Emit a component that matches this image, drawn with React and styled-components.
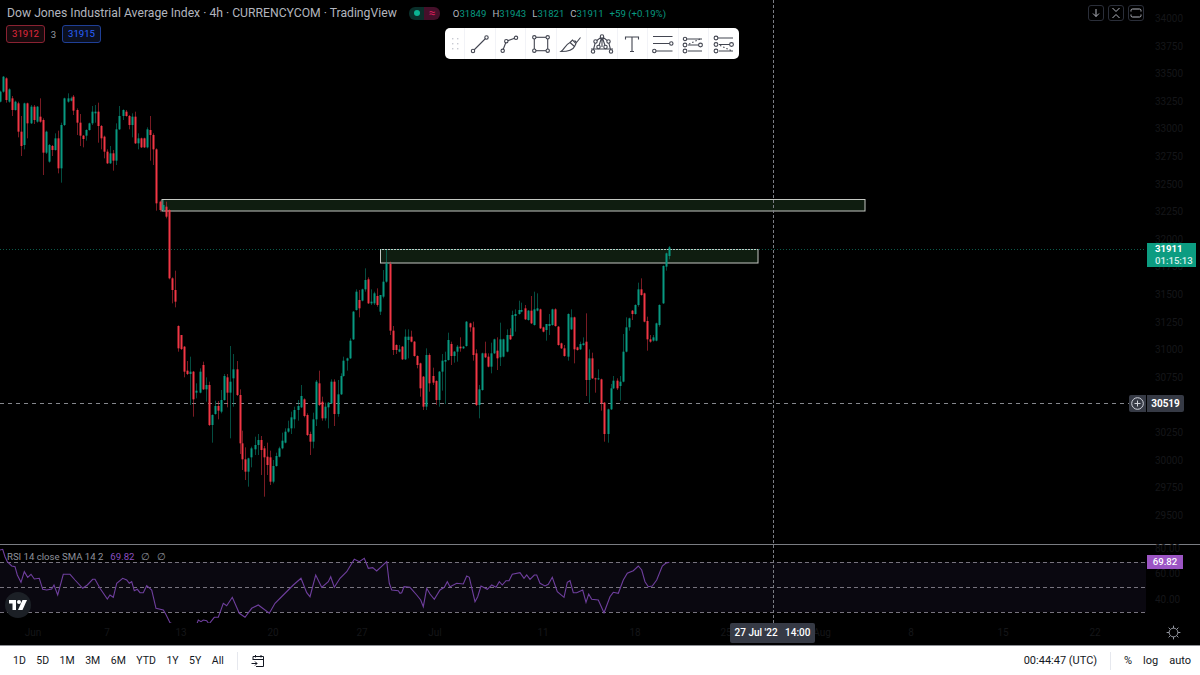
import React from 'react'
import styled, { createGlobalStyle } from 'styled-components'

const GREEN = '#089981'
const RED = '#f23645'
const FONT = 'Roboto, "Noto Sans", "Liberation Sans", sans-serif'

const GlobalStyle = createGlobalStyle`
  html, body { margin: 0; padding: 0; background: #000; }
  body { font-family: ${FONT}; overflow: hidden; }
`

// candles as read off the chart: [up, x, bodyTop, bodyBottom, wickTop, wickBottom], in 3x crop coords
const CROPS = [
  [0, 70, [
    [1,0,65,95,62,97],[1,8,20,65,18,68],[0,17,25,90,22,98],[1,27,58,95,55,98],[0,36,85,120,78,138],[1,45,95,120,92,122],
    [0,54,100,185,95,202],[0,64,185,228,138,258],[1,73,100,225,98,238],[0,82,100,160,98,205],[1,92,110,160,105,162],
    [0,101,110,150,105,162],[1,110,110,155,108,158],[0,119,140,155,85,158],[0,128,150,248,145,315],[1,137,185,248,182,252],
    [1,146,225,275,222,278],[0,155,228,240,225,258],[1,165,205,240,190,242],[0,174,205,295,182,310],[1,184,165,295,158,338],
    [1,193,85,165,83,168],[1,203,85,95,70,98],[1,212,85,92,80,94],[0,220,80,122,75,135],[0,230,120,158,115,195],
    [0,239,158,197,132,228],[0,248,197,207,195,232],[1,257,180,197,178,212],[1,266,160,180,158,182],[1,276,125,160,108,165],
    [1,285,125,130,105,158],[0,294,125,168,98,218],[0,304,168,205,165,238],[0,313,200,245,197,265],[0,322,245,280,238,282],
    [1,331,250,280,228,282],[0,340,250,272,240,302],[1,349,178,272,160,285],[1,358,138,178,108,180],[1,368,120,138,118,150],
    [0,377,125,138,120,140],[0,386,138,165,135,178],[1,396,140,165,130,202],[0,405,140,220,125,222],[1,415,205,220,190,238],
    [0,423,205,232,203,234],[0,432,205,232,203,234],[1,441,178,232,172,235],[0,450,180,195,138,272],[0,460,195,238,190,285],
    [0,469,238,400,235,422],[0,479,395,420,392,425],[1,488,405,420,390,422],[0,497,410,440,395,445],[0,507,420,625,418,628],
    [0,516,625,660,622,700],[0,524,660,695,602,712]
  ]],
  [150, 300, [
    [0,83,78,145,76,155],[0,92,105,147,105,150],[0,102,140,215,138,232],[0,111,212,222,183,225],[1,121,215,222,170,315],
    [0,130,215,298,213,350],[1,139,272,278,250,295],[1,149,215,278,205,280],[0,158,195,268,185,270],[1,167,255,268,232,305],
    [0,176,255,375,245,378],[1,185,345,375,343,428],[1,194,318,342,302,344],[0,203,318,332,303,358],[1,213,300,335,270,340],
    [1,222,228,300,222,302],[0,231,232,278,222,322],[1,241,245,278,138,415],[1,250,208,235,162,320],[0,260,208,285,183,288],
    [0,269,285,430,268,462],[0,277,430,478,392,510],[0,286,478,515,442,540],[1,295,475,515,473,560],[1,304,445,472,440,502],
    [1,314,435,448,410,465],[1,323,420,435,402,465],[0,332,420,450,408,525],[0,342,445,472,438,590],[0,351,470,495,428,525],
    [0,360,472,545,452,555],[1,370,498,545,480,550],[1,378,468,498,458,500],[1,387,445,470,440,472],[1,396,422,445,398,448],
    [1,406,395,428,385,430],[1,415,385,395,362,398],[1,424,352,385,335,402],[1,433,330,358,320,385],[1,443,318,330,300,362],
    [1,452,288,322,255,324],[0,461,298,348,295,352],[0,471,345,405,340,408],[0,479,402,425,395,465],[1,488,358,425,338,445],
    [1,498,245,358,240,378],[0,507,250,315,212,318],[0,516,305,355,290,362],[1,525,320,355,308,362],[1,535,308,322,306,385],
    [1,544,245,310,238,312],[0,553,245,342,238,378],[1,563,283,342,240,350],[1,572,228,283,220,285],[1,580,182,228,170,230],
    [1,590,175,182,173,212],[1,599,122,175,115,177],[1,608,35,118,33,120]
  ]],
  [340, 240, [
    [1,47,155,210,148,212],[0,56,180,205,150,232],[1,66,148,182,146,184],[1,75,120,148,85,155],[0,85,118,190,112,192],
    [1,94,185,190,148,195],[1,103,160,190,155,195],[0,112,168,195,145,200],[1,121,165,215,165,225],[1,130,125,170,90,175],
    [1,139,70,125,30,128],[0,149,72,272,65,285]
  ]],
  [150, 300, [
    [0,728,92,150,78,165],[0,738,135,150,133,162],[1,747,148,155,135,157],[0,756,140,178,138,180],[1,765,110,178,88,180],
    [1,774,110,120,88,175],[0,783,110,125,92,127],[0,792,125,168,123,170],[0,801,168,195,166,205]
  ]],
  [420, 240, [
    [0,0,370,445,368,470],[0,9,410,500,408,510],[1,18,345,500,325,510],[0,28,345,430,340,455],[0,38,408,428,383,435],
    [0,47,423,480,421,495],[1,56,395,480,393,500],[1,65,362,395,342,452],[1,74,360,365,335,492],[1,84,300,360,278,362],
    [0,93,312,348,305,375],[1,102,335,348,333,368],[1,111,320,335,315,365],[0,120,320,325,292,335],[1,130,320,325,318,327],
    [1,139,245,318,243,320],[0,149,250,262,248,275],[0,158,262,345,245,362],[0,167,340,495,328,498],[1,176,448,495,435,535],
    [1,185,340,450,338,452],[0,194,340,352,305,354],[0,204,350,380,340,382],[1,213,340,380,308,400],[1,222,298,340,296,342],
    [0,231,332,355,292,390],[1,241,298,352,248,378],[1,250,298,350,296,352],[1,260,285,335,268,337],[0,269,285,298,265,300],
    [1,277,225,288,212,290],[1,286,222,228,208,275],[1,296,210,222,182,224],[1,304,210,215,188,217],[0,314,205,238,195,240],
    [1,323,212,240,210,242],[0,333,212,250,168,252],[1,342,208,255,155,257],[1,351,205,212,160,214],[0,360,208,265,206,267],
    [0,370,262,275,260,277],[1,378,252,270,252,302],[1,387,252,258,222,285],[1,396,208,255,206,257],[0,405,208,258,205,260],
    [0,415,260,315,258,317],[0,424,310,325,308,327],[0,433,325,348,315,350],[1,443,222,350,220,362],[1,452,232,268,208,270],
    [0,461,232,328,230,370],[0,470,322,330,320,332],[1,479,312,328,305,330],[1,488,310,315,292,317],[0,498,305,420,220,468],
    [1,507,355,420,328,488],[0,516,355,415,338,417],[0,525,415,418,413,458],[1,535,415,418,388,420],[0,544,418,490,416,512],
    [0,553,488,582,486,605],[1,563,508,582,506,608],[1,572,445,508,432,510],[1,580,422,445,408,447],[0,590,422,445,415,450],
    [1,599,425,438,408,482],[1,608,335,425,282,427],[1,617,262,335,232,337],[1,627,235,262,233,272],[0,636,212,222,210,240],
    [1,645,195,222,193,224],[1,655,148,195,128,200],[0,664,148,165,115,167],[0,673,160,245,158,247],[0,681,243,298,230,332],
    [0,690,298,305,285,308],[1,700,292,302,285,305],[1,709,250,302,248,304],[1,718,195,255,193,260],[1,728,78,190,76,192],
    [1,737,40,80,38,92],[1,746,22,48,18,58]
  ]]
]

const candles = CROPS.flatMap(([ox, oy, rows]) =>
  rows.map(([up, x, t, b, wt, wb]) => ({
    up,
    x: Math.round(ox + x / 3),
    top: oy + t / 3,
    bottom: oy + b / 3,
    wickTop: oy + wt / 3,
    wickBottom: oy + wb / 3
  }))
)

const RSI_LEFT = [[0,30],[8,28],[15,50],[22,65],[35,78],[45,80],[52,105],[63,127],[73,95],[83,112],[93,103],[103,117],[118,115],[128,148],[140,150],[155,147],[162,135],[173,165],[190,103],[210,103],[225,120],[248,145],[262,135],[278,118],[285,118],[300,145],[322,177],[330,165],[340,172],[350,130],[368,115],[380,120],[388,130],[395,125],[403,152],[412,148],[420,158],[430,158],[440,137],[455,150],[468,205],[490,210],[497,222],[510,248],[518,252],[540,268],[585,268],[595,240],[603,245],[610,240],[620,242],[627,252],[643,232],[655,232],[670,190],[680,197],[697,172],[718,220],[735,232],[755,205],[775,195],[808,220],[825,190],[850,165],[880,135],[903,115],[920,158],[930,170],[947,105],[965,142],[985,125],[992,110],[1003,142],[1020,115],[1040,95],[1063,58],[1078,65],[1093,55],[1105,85],[1118,83],[1130,93],[1160,65],[1168,130],[1175,150],[1195,152]]
const RSI_RIGHT = [[0,160],[5,158],[12,140],[30,142],[50,165],[62,180],[70,200],[80,145],[90,162],[103,178],[120,150],[133,142],[142,125],[150,140],[170,130],[190,132],[200,108],[208,112],[225,185],[233,170],[243,138],[262,148],[275,135],[288,142],[298,125],[307,135],[318,122],[327,122],[337,103],[360,98],[372,115],[380,105],[390,118],[403,105],[410,105],[420,130],[435,138],[445,133],[457,112],[472,155],[492,172],[502,127],[510,122],[520,158],[530,158],[548,150],[558,187],[566,162],[575,178],[595,180],[612,218],[630,170],[640,157],[655,160],[670,120],[682,100],[700,92],[715,78],[725,90],[735,125],[745,140],[757,138],[770,120],[787,78],[797,70],[808,67]]

const rsiPoints = [
  ...RSI_LEFT.map(([x, y]) => `${(x / 3).toFixed(1)},${(y / 3).toFixed(1)}`),
  ...RSI_RIGHT.map(([x, y]) => `${(400 + x / 3).toFixed(1)},${(y / 3).toFixed(1)}`)
].join(' ')

const PRICES = [34000, 33750, 33500, 33250, 33000, 32750, 32500, 32250, 32000, 31750, 31500, 31250, 31000, 30750, '', 30250, 30000, 29750, 29500]
const TIME_TICKS = [['Jun', 33], ['7', 107], ['13', 181], ['20', 273], ['27', 362], ['Jul', 435], ['11', 543], ['18', 635], ['25', 726], ['Aug', 822], ['8', 911], ['15', 1003], ['22', 1095]]
const RANGES = ['1D', '5D', '1M', '3M', '6M', 'YTD', '1Y', '5Y', 'All']

const Page = styled.div`
  position: relative;
  width: 1200px;
  height: 675px;
  display: flex;
  flex-direction: column;
  overflow: hidden;
  background: #000;
`
const MainRow = styled.div`
  display: flex;
  height: 544px;
`
const Plot = styled.div`
  position: relative;
  width: 1146px;
  flex: none;
`
const PlotSvg = styled.svg`
  display: block;
`
const PriceAxis = styled.div`
  flex: 1;
  padding: 11px 0 0 9px;
  display: flex;
  flex-direction: column;
  color: #151619;
  font-size: 10px;
`
const PriceTick = styled.div`
  height: 27.6px;
  flex: none;
  line-height: 16px;
`
const Separator = styled.div`
  height: 1px;
  background: #7a7c82;
  flex: none;
`
const RsiRow = styled.div`
  display: flex;
  height: 78px;
`
const RsiAxis = styled.div`
  flex: 1;
  margin-top: -4px;
  padding: 0 0 0 9px;
  display: flex;
  flex-direction: column;
  gap: 9.4px;
  color: #151619;
  font-size: 10px;
  line-height: 16px;
`
const TimeAxis = styled.div`
  position: relative;
  height: 22px;
  color: #151619;
  font-size: 10px;
`
const TimeTick = styled.span`
  position: absolute;
  top: 4px;
  left: ${({ $x }) => $x}px;
  transform: translateX(-50%);
`
const BottomBar = styled.div`
  height: 30px;
  box-sizing: border-box;
  border-top: 1px solid #8d8f95;
  background: #fff;
  display: flex;
  align-items: center;
  padding: 0 9px 0 13px;
  color: #131722;
  font-size: 11px;
`
const RangeList = styled.div`
  display: flex;
  gap: 10.5px;
  font-size: 10.5px;
`
const VDivider = styled.div`
  width: 1px;
  height: 18px;
  background: #e6e8ee;
  margin: 0 13px;
`
const Spacer = styled.div`
  flex: 1;
`
const RightTools = styled.div`
  display: flex;
  gap: 11px;
`
const Legend = styled.div`
  position: absolute;
  top: 4px;
  left: 7px;
  display: flex;
  align-items: center;
  white-space: nowrap;
`
const Title = styled.span`
  color: #b2b5be;
  font-size: 12.2px;
  line-height: 18px;
`
const StatusPill = styled.div`
  display: flex;
  width: 31px;
  height: 13px;
  margin: 0 13px 0 12px;
  border-radius: 6px;
  overflow: hidden;
`
const StatusPart = styled.div`
  flex: 1;
  display: flex;
  align-items: center;
  justify-content: center;
  background: ${({ $bg }) => $bg};
  color: #d81e5b;
  font-size: 12px;
`
const StatusDot = styled.i`
  width: 6px;
  height: 6px;
  border-radius: 50%;
  background: #0bb392;
`
const Ohlc = styled.div`
  display: flex;
  gap: 6px;
  font-size: 9.6px;
  color: #b2b5be;
`
const Val = styled.span`
  color: ${GREEN};
`
const Quotes = styled.div`
  position: absolute;
  top: 25px;
  left: 6px;
  display: flex;
  align-items: center;
`
const Quote = styled.div`
  width: 39px;
  height: 18px;
  box-sizing: border-box;
  border: 1px solid ${({ $border }) => $border};
  border-radius: 3px;
  background: ${({ $bg }) => $bg};
  color: ${({ $color }) => $color};
  font-size: 9.6px;
  line-height: 16px;
  text-align: center;
`
const Spread = styled.span`
  width: 17px;
  color: #9598a1;
  font-size: 9.6px;
  text-align: center;
`
const DrawBar = styled.div`
  position: absolute;
  top: 28px;
  left: 445px;
  display: flex;
  height: 31px;
  background: #fff;
  border-radius: 5px;
`
const Grip = styled.div`
  width: 19px;
  display: flex;
  align-items: center;
  justify-content: center;
`
const DrawTool = styled.div`
  width: 30.5px;
  display: flex;
  align-items: center;
  justify-content: center;
  border-left: 1px solid #f2f3f7;
  box-sizing: border-box;
`
const ChartButtons = styled.div`
  position: absolute;
  top: 5px;
  left: 1088px;
  display: flex;
  gap: 4px;
`
const ChartButton = styled.div`
  width: 16px;
  height: 16px;
  box-sizing: border-box;
  border: 1px solid #2a2e39;
  border-radius: 3px;
  display: flex;
  align-items: center;
  justify-content: center;
`
const PriceTag = styled.div`
  position: absolute;
  top: 243px;
  left: 1147px;
  width: 49px;
  height: 24px;
  padding-left: 8px;
  box-sizing: border-box;
  background: #0c9c81;
  color: #fff;
  font-size: 9.6px;
  font-weight: 700;
  line-height: 12px;
`
const Countdown = styled.div`
  color: #d5efe9;
  font-weight: 500;
`
const CrossPrice = styled.div`
  position: absolute;
  top: 395px;
  left: 1129px;
  display: flex;
  gap: 1px;
  height: 17px;
`
const PlusBox = styled.div`
  width: 17px;
  background: #363a45;
  display: flex;
  align-items: center;
  justify-content: center;
  border-radius: 2px 0 0 2px;
`
const CrossValue = styled.div`
  width: 37px;
  background: #363a45;
  color: #fff;
  font-size: 10px;
  font-weight: 700;
  line-height: 17px;
  text-align: center;
  border-radius: 0 2px 2px 0;
`
const CrossLine = styled.div`
  position: absolute;
  top: 0;
  left: 773px;
  height: 623px;
  border-left: 1px dashed #7b7d84;
`
const TimeLabel = styled.div`
  position: absolute;
  top: 623px;
  left: 730px;
  width: 85px;
  height: 20px;
  background: #363a45;
  border-radius: 2px;
  color: #fff;
  font-size: 10px;
  font-weight: 500;
  line-height: 20px;
  text-align: center;
  white-space: pre;
`
const RsiLegend = styled.div`
  position: absolute;
  top: 4px;
  left: 7px;
  display: flex;
  gap: 7px;
  color: #8f929b;
  font-size: 9.6px;
  line-height: 15px;
  white-space: nowrap;
`
const RsiValue = styled.span`
  color: #8a4fc0;
`
const RsiTag = styled.div`
  position: absolute;
  top: 555px;
  left: 1147px;
  width: 36px;
  height: 14px;
  background: #9c55c4;
  color: #fff;
  font-size: 9.6px;
  font-weight: 500;
  line-height: 14px;
  text-align: center;
`
const LogoBadge = styled.div`
  position: absolute;
  top: 47px;
  left: 5px;
  width: 26px;
  height: 26px;
  border-radius: 50%;
  background: #1c2026;
  display: flex;
  align-items: center;
  justify-content: center;
`
const GearSlot = styled.div`
  position: absolute;
  top: 2px;
  left: 1166px;
  line-height: 0;
`

const Tool = ({ children }) => (
  <DrawTool>
    <svg width='24' height='24' viewBox='0 0 24 24' fill='none' stroke='#434651' strokeWidth='1.1'>
      {children}
    </svg>
  </DrawTool>
)

const Dot = ({ x, y, r = 1.7 }) => <circle cx={x} cy={y} r={r} fill='#fff' />

function DrawTools () {
  return (
    <DrawBar>
      <Grip>
        <svg width='8' height='12' viewBox='0 0 8 12' fill='#c9cbd3'>
          {[0, 5, 10].map((y) => (
            <g key={y}>
              <rect x='1' y={y} width='1.4' height='1.4' />
              <rect x='6' y={y} width='1.4' height='1.4' />
            </g>
          ))}
        </svg>
      </Grip>
      <Tool>
        <path d='M5 19L18.5 5.5' />
        <Dot x={5} y={19} />
        <Dot x={18.5} y={5.5} />
      </Tool>
      <Tool>
        <path d='M4.7 18.8L8.3 9.2L18 5.8' />
        <Dot x={4.7} y={18.8} />
        <Dot x={8.3} y={9.2} />
        <Dot x={18} y={5.8} />
      </Tool>
      <Tool>
        <rect x='5.3' y='5.3' width='13.4' height='13.4' />
        <Dot x={5.3} y={5.3} />
        <Dot x={18.7} y={5.3} />
        <Dot x={5.3} y={18.7} />
        <Dot x={18.7} y={18.7} />
      </Tool>
      <Tool>
        <path d='M2 19.5C5.5 17 6.5 12.5 11 10.5L15.5 14.5C14 18 10 19.5 2 19.5Z' />
        <path d='M11 10.5L13.5 8L17 11.5L15.5 14.5' />
        <path d='M15.5 8.5L17.5 10.5L21.5 5.5' />
      </Tool>
      <Tool>
        <path d='M12 4.5L5.5 9.5L3 19.5M12 4.5L18.5 9.5L21 19.5M12 4.5V15M8.5 15L12 4.5L15.5 15M1 17H23' />
        <Dot x={12} y={4.5} />
        <Dot x={5.5} y={9.5} />
        <Dot x={18.5} y={9.5} />
        <Dot x={8.5} y={15} />
        <Dot x={15.5} y={15} />
        <Dot x={3} y={19.5} />
        <Dot x={21} y={19.5} />
      </Tool>
      <Tool>
        <path d='M5.5 7.5V5H18.5V7.5M12 5V19.5M10 19.5H14' />
      </Tool>
      <Tool>
        <path d='M2 4.5H21.5M2 11.5H18.5M5 19H21.5' />
        <Dot x={20.3} y={11.5} />
        <Dot x={3.3} y={19} />
      </Tool>
      <Tool>
        <path d='M5 7H21M7 13H18M7 19H21' />
        <path d='M8 12L19 7' strokeDasharray='1.5 2' />
        <Dot x={4} y={7} />
        <Dot x={4} y={13} r={1.9} />
        <Dot x={19.5} y={13} r={1.9} />
        <Dot x={4} y={19} r={1.9} />
      </Tool>
      <Tool>
        <path d='M5 6H21M7 12.5H18M7 19H21' />
        <path d='M8 13.5L20 19' strokeDasharray='1.5 2' />
        <Dot x={4} y={6} r={1.9} />
        <Dot x={4} y={12.5} r={1.9} />
        <Dot x={19.5} y={12.5} r={1.9} />
        <Dot x={4} y={19} r={1.9} />
      </Tool>
    </DrawBar>
  )
}

function ChartSvg () {
  return (
    <PlotSvg width='1146' height='544'>
      <rect x='162' y='199.5' width='703' height='11.5' fill='#0f1d10' stroke='#c4c7c2' />
      <rect x='380.5' y='249.5' width='377.5' height='13.5' fill='#0f1d10' stroke='#c4c7c2' />
      <line x1='0' y1='249.5' x2='1146' y2='249.5' stroke='#0d5a4b' strokeDasharray='1 2' />
      <line x1='0' y1='403.5' x2='1129' y2='403.5' stroke='#85878d' strokeDasharray='4 4' />
      {candles.map((c, i) => {
        const color = c.up ? GREEN : RED
        return (
          <g key={i} fill={color}>
            <rect x={c.x} y={c.wickTop} width='1' height={c.wickBottom - c.wickTop} opacity='0.5' />
            <rect x={c.x - 0.5} y={c.top} width='2' height={Math.max(c.bottom - c.top, 1)} />
          </g>
        )
      })}
    </PlotSvg>
  )
}

function RsiSvg () {
  return (
    <PlotSvg width='1146' height='78' viewBox='0 0 1146 78'>
      <rect x='0' y='17' width='1146' height='50' fill='#0a0810' />
      {[17, 42, 67].map((y) => (
        <line key={y} x1='0' y1={y + 0.5} x2='1146' y2={y + 0.5} stroke='#77737e' strokeDasharray='4 3' />
      ))}
      <g transform='translate(0 -5)'>
        <polyline points={rsiPoints} fill='none' stroke='#6f3f9e' strokeWidth='1.1' />
      </g>
    </PlotSvg>
  )
}

export default function App () {
  return (
    <Page>
      <GlobalStyle />
      <MainRow>
        <Plot>
          <ChartSvg />
          <Legend>
            <Title>Dow Jones Industrial Average Index · 4h · CURRENCYCOM · TradingView</Title>
            <StatusPill>
              <StatusPart $bg='#0a2f2a'><StatusDot /></StatusPart>
              <StatusPart $bg='#45102a'>≈</StatusPart>
            </StatusPill>
            <Ohlc>
              <span>O<Val>31849</Val></span>
              <span>H<Val>31943</Val></span>
              <span>L<Val>31821</Val></span>
              <span>C<Val>31911</Val></span>
              <Val>+59 (+0.19%)</Val>
            </Ohlc>
          </Legend>
          <Quotes>
            <Quote $border='#8a2232' $bg='#170a0d' $color='#e0293e'>31912</Quote>
            <Spread>3</Spread>
            <Quote $border='#1f3f96' $bg='#0b1020' $color='#2962ff'>31915</Quote>
          </Quotes>
          <DrawTools />
          <ChartButtons>
            <ChartButton>
              <svg width='10' height='10' viewBox='0 0 10 10' fill='none' stroke='#b2b5be'>
                <path d='M5 1V8.5M2 5.5L5 8.5L8 5.5' />
              </svg>
            </ChartButton>
            <ChartButton>
              <svg width='10' height='12' viewBox='0 0 10 12' fill='none' stroke='#b2b5be'>
                <path d='M1.5 1L5 4.5L8.5 1M1.5 11L5 7.5L8.5 11' />
              </svg>
            </ChartButton>
            <ChartButton>
              <svg width='12' height='10' viewBox='0 0 12 10' fill='none' stroke='#b2b5be'>
                <path d='M1 3.5V2.5Q1 1 2.5 1H9.5Q11 1 11 2.5V3.5M1 6.5V7.5Q1 9 2.5 9H9.5Q11 9 11 7.5V6.5' />
              </svg>
            </ChartButton>
          </ChartButtons>
        </Plot>
        <PriceAxis>
          {PRICES.map((p, i) => <PriceTick key={i}>{p}</PriceTick>)}
        </PriceAxis>
      </MainRow>
      <Separator />
      <RsiRow>
        <Plot>
          <RsiSvg />
          <RsiLegend>
            <span>RSI 14 close SMA 14 2</span>
            <RsiValue>69.82</RsiValue>
            <span>∅</span>
            <span>∅</span>
          </RsiLegend>
          <LogoBadge>
            <svg width='18' height='10' viewBox='0 0 36 20' fill='#fff'>
              <path d='M0 0H14V20H7V7H0Z' />
              <circle cx='20' cy='4' r='4' />
              <path d='M27 0H36L27 20H18Z' />
            </svg>
          </LogoBadge>
        </Plot>
        <RsiAxis>
          <span>80.00</span>
          <span>60.00</span>
          <span>40.00</span>
        </RsiAxis>
      </RsiRow>
      <TimeAxis>
        {TIME_TICKS.map(([label, x]) => <TimeTick key={label} $x={x}>{label}</TimeTick>)}
        <GearSlot>
          <svg width='15' height='15' viewBox='0 0 24 24' fill='none' stroke='#9598a1' strokeWidth='1.6'>
            <circle cx='12' cy='12' r='7' />
            <path d='M12 1V5M12 19V23M1 12H5M19 12H23M4.2 4.2L7 7M17 17L19.8 19.8M4.2 19.8L7 17M17 7L19.8 4.2' />
          </svg>
        </GearSlot>
      </TimeAxis>
      <BottomBar>
        <RangeList>
          {RANGES.map((r) => <span key={r}>{r}</span>)}
        </RangeList>
        <VDivider />
        <svg width='14' height='14' viewBox='0 0 14 14' fill='none' stroke='#131722'>
          <path d='M2 6V2.5H12.5V12.5H5M2 5.5H12.5M4.5 1V3.5M10 1V3.5M0.5 9.5H6M4 7.5L6 9.5L4 11.5' />
        </svg>
        <Spacer />
        <span>00:44:47 (UTC)</span>
        <VDivider />
        <RightTools>
          <span>%</span>
          <span>log</span>
          <span>auto</span>
        </RightTools>
      </BottomBar>
      <CrossLine />
      <PriceTag>
        31911
        <Countdown>01:15:13</Countdown>
      </PriceTag>
      <CrossPrice>
        <PlusBox>
          <svg width='13' height='13' viewBox='0 0 13 13' fill='none' stroke='#d1d4dc'>
            <circle cx='6.5' cy='6.5' r='5.8' />
            <path d='M6.5 3.5V9.5M3.5 6.5H9.5' />
          </svg>
        </PlusBox>
        <CrossValue>30519</CrossValue>
      </CrossPrice>
      <RsiTag>69.82</RsiTag>
      <TimeLabel>{"27 Jul '22   14:00"}</TimeLabel>
    </Page>
  )
}
